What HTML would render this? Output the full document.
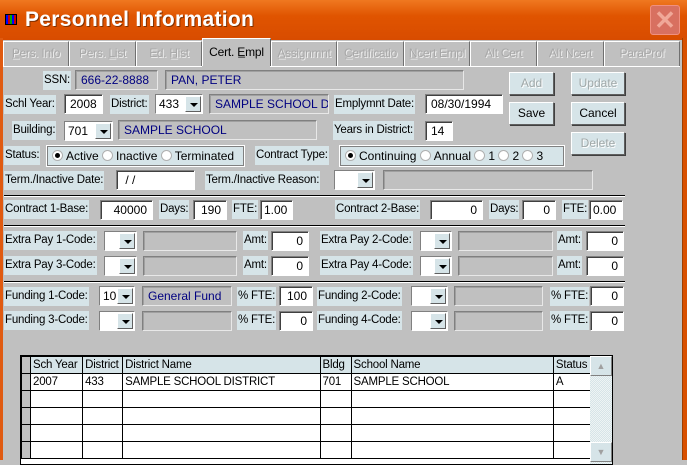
<!DOCTYPE html>
<html><head><style>
*{margin:0;padding:0;box-sizing:border-box}
body{width:687px;height:460px;overflow:hidden;background:#c0c0c0;font-family:"Liberation Sans",sans-serif;font-size:12px;position:relative}
.a{position:absolute}
.lb{position:absolute;background:#d6e4e8;color:#000;height:19px;line-height:19px;padding:0 1px;white-space:nowrap;font-size:11.5px;letter-spacing:-0.2px}
.in{position:absolute;background:#fff;height:20px;line-height:18px;border:1px solid #808080;border-right-color:#fff;border-bottom-color:#fff;box-shadow:inset 1px 1px 0 #404040;padding:0 5px;font-size:12px;white-space:nowrap;overflow:hidden}
.r{text-align:right}
.ro{position:absolute;background:#c0c0c0;height:20px;line-height:18px;border:1px solid #808080;border-right-color:#e8e8e8;border-bottom-color:#e8e8e8;box-shadow:inset 1px 1px 0 #a0a0a0;padding:0 5px;color:#000080;font-size:12px;white-space:nowrap;overflow:hidden}
.sel{position:absolute;background:#fff;height:20px;border:1px solid #808080;border-right-color:#fff;border-bottom-color:#fff;font-size:12px;line-height:18px;padding-left:3px;overflow:hidden}
.sel b{position:absolute;right:1px;top:1px;width:16px;height:16px;background:#d6e4e8;border:1px solid #fff;border-right-color:#606060;border-bottom-color:#606060}
.sel b:after{content:"";position:absolute;left:4px;top:6px;border:4px solid transparent;border-top:4px solid #000;border-bottom:0}
.btn{position:absolute;background:#d6e4e8;border:1px solid #fff;border-right-color:#606060;border-bottom-color:#606060;box-shadow:1px 1px 0 #404040;text-align:center;line-height:21px;height:23px;font-size:12px}
.dis{color:#a0a8a8;text-shadow:1px 1px 0 #fff}
.hl{position:absolute;left:4px;width:621px;height:1px;background:#000;border-bottom:1px solid #fff;height:2px}
.tab{position:absolute;top:41px;height:25px;line-height:23px;text-align:center;color:#a8a8a8;text-shadow:1px 1px 0 #eee;border:1px solid #fff;border-right-color:#707070;border-bottom:none;font-size:12px;white-space:nowrap;overflow:hidden;letter-spacing:-0.3px}
.grp{position:absolute;background:#d6e4e8;height:22px;border:1px solid #fff;box-shadow:inset -1px -1px 0 #808080, inset 1px 1px 0 #808080;line-height:20px;padding-left:5px;white-space:nowrap;font-size:12px}
.rd{display:inline-block;width:11px;height:11px;border-radius:50%;background:#fff;border:1px solid #b0b0b0;vertical-align:-1px;margin-right:3px;position:relative}
.rd.on:after{content:"";position:absolute;left:2px;top:2px;width:5px;height:5px;border-radius:50%;background:#000}
table{border-collapse:collapse;font-size:11.5px;letter-spacing:-0.2px}
td{border:1px solid #000;height:17px;line-height:16px;padding:0 2px;white-space:nowrap;overflow:hidden}
</style></head><body>
<div class="a" style="left:0;top:0;width:687px;height:40px;background:linear-gradient(#f07820,#e05400 40%,#d84c00)"></div>
<div class="a" style="left:0;top:38px;width:3px;height:422px;background:#e05a10"></div>
<div class="a" style="left:682px;top:38px;width:5px;height:422px;background:#d85000;border-left:1px solid #a04000"></div>
<div class="a" style="left:5px;top:14px;width:12px;height:11px;background:repeating-linear-gradient(90deg,#00f 0 2px,#c00 2px 4px,#0a0 4px 6px);border:1px solid #000"></div>
<div class="a" style="left:25px;top:8px;color:#fff;font-weight:bold;font-size:21px;text-shadow:1px 1px 0 #803000;letter-spacing:0.3px">Personnel Information</div>
<div class="a" style="left:650px;top:5px;width:30px;height:30px;background:#d87060;border:1px solid #f09080;border-radius:3px;color:#f0a898;font-size:26px;line-height:28px;text-align:center;font-weight:bold">✕</div>

<div class="tab" style="left:3px;width:66px">P̲ers. Info</div>
<div class="tab" style="left:69px;width:67px">Pers. L̲ist</div>
<div class="tab" style="left:136px;width:66px">Ed. H̲ist</div>
<div class="a" style="left:202px;top:38px;width:69px;height:29px;background:#c0c0c0;border:1px solid #fff;border-right-color:#606060;border-bottom:none;text-align:center;line-height:26px;letter-spacing:-0.2px">Cert. E̲mpl</div>
<div class="tab" style="left:271px;width:66px">A̲ssignmnt</div>
<div class="tab" style="left:337px;width:67px">C̲ertificatio</div>
<div class="tab" style="left:404px;width:66px">N̲cert Empl</div>
<div class="tab" style="left:470px;width:67px">Alt Cert</div>
<div class="tab" style="left:537px;width:67px">Alt Ncert</div>
<div class="tab" style="left:604px;width:76px">ParaProf</div>
<div class="a" style="left:3px;top:66px;width:677px;height:1px;background:#fff"></div>
<div class="a" style="left:202px;top:66px;width:68px;height:1px;background:#c0c0c0"></div>

<div class="lb" style="left:43px;top:71px">SSN:</div>
<div class="ro" style="left:75px;top:70px;width:83px">666-22-8888</div>
<div class="ro" style="left:165px;top:70px;width:299px">PAN, PETER</div>
<div class="btn dis" style="left:509px;top:72px;width:45px">Add</div>
<div class="btn dis" style="left:571px;top:72px;width:54px">Update</div>
<div class="btn" style="left:509px;top:102px;width:45px">Save</div>
<div class="btn" style="left:571px;top:102px;width:54px">Cancel</div>
<div class="btn dis" style="left:571px;top:132px;width:54px">Delete</div>

<div class="lb" style="left:4px;top:95px">Schl Year:</div>
<div class="in" style="left:64px;top:94px;width:39px">2008</div>
<div class="lb" style="left:110px;top:95px">District:</div>
<div class="sel" style="left:155px;top:94px;width:48px">433<b></b></div>
<div class="ro" style="left:209px;top:94px;width:120px">SAMPLE SCHOOL D</div>
<div class="lb" style="left:334px;top:95px">Emplymnt Date:</div>
<div class="in" style="left:425px;top:94px;width:78px">08/30/1994</div>

<div class="lb" style="left:12px;top:121px">Building:</div>
<div class="sel" style="left:64px;top:121px;width:49px">701<b></b></div>
<div class="ro" style="left:118px;top:120px;width:199px">SAMPLE SCHOOL</div>
<div class="lb" style="left:333px;top:121px">Years in District:</div>
<div class="in" style="left:425px;top:121px;width:28px">14</div>

<div class="lb" style="left:4px;top:146px">Status:</div>
<div class="grp" style="left:46px;top:145px;width:199px"><span class="rd on"></span>Active <span class="rd"></span>Inactive <span class="rd"></span>Terminated</div>
<div class="lb" style="left:255px;top:146px">Contract Type:</div>
<div class="grp" style="left:339px;top:145px;width:226px"><span class="rd on"></span>Continuing <span class="rd"></span>Annual <span class="rd"></span>1 <span class="rd"></span>2 <span class="rd"></span>3</div>

<div class="lb" style="left:4px;top:171px">Term./Inactive Date:</div>
<div class="in" style="left:116px;top:170px;width:79px">&nbsp;/ /</div>
<div class="lb" style="left:205px;top:171px">Term./Inactive Reason:</div>
<div class="sel" style="left:334px;top:170px;width:41px"><b></b></div>
<div class="ro" style="left:383px;top:170px;width:210px"></div>

<div class="hl" style="top:195px"></div>
<div class="lb" style="left:4px;top:200px">Contract 1-Base:</div>
<div class="in r" style="left:100px;top:200px;width:53px">40000</div>
<div class="lb" style="left:159px;top:200px">Days:</div>
<div class="in r" style="left:193px;top:200px;width:34px">190</div>
<div class="lb" style="left:232px;top:200px">FTE:</div>
<div class="in" style="left:260px;top:200px;width:33px;padding-left:3px">1.00</div>
<div class="lb" style="left:335px;top:200px">Contract 2-Base:</div>
<div class="in r" style="left:430px;top:200px;width:53px">0</div>
<div class="lb" style="left:489px;top:200px">Days:</div>
<div class="in r" style="left:522px;top:200px;width:34px">0</div>
<div class="lb" style="left:562px;top:200px">FTE:</div>
<div class="in" style="left:589px;top:200px;width:34px;padding-left:3px">0.00</div>

<div class="hl" style="top:225px"></div>
<div class="lb" style="left:4px;top:231px">Extra Pay 1-Code:</div>
<div class="sel" style="left:104px;top:231px;width:33px"><b></b></div>
<div class="ro" style="left:143px;top:231px;width:94px"></div>
<div class="lb" style="left:243px;top:231px">Amt:</div>
<div class="in r" style="left:271px;top:231px;width:38px">0</div>
<div class="lb" style="left:320px;top:231px">Extra Pay 2-Code:</div>
<div class="sel" style="left:420px;top:231px;width:32px"><b></b></div>
<div class="ro" style="left:458px;top:231px;width:95px"></div>
<div class="lb" style="left:557px;top:231px">Amt:</div>
<div class="in r" style="left:586px;top:231px;width:38px">0</div>

<div class="lb" style="left:4px;top:256px">Extra Pay 3-Code:</div>
<div class="sel" style="left:104px;top:256px;width:33px"><b></b></div>
<div class="ro" style="left:143px;top:256px;width:94px"></div>
<div class="lb" style="left:243px;top:256px">Amt:</div>
<div class="in r" style="left:271px;top:256px;width:38px">0</div>
<div class="lb" style="left:320px;top:256px">Extra Pay 4-Code:</div>
<div class="sel" style="left:420px;top:256px;width:32px"><b></b></div>
<div class="ro" style="left:458px;top:256px;width:95px"></div>
<div class="lb" style="left:557px;top:256px">Amt:</div>
<div class="in r" style="left:586px;top:256px;width:38px">0</div>

<div class="hl" style="top:281px"></div>
<div class="lb" style="left:4px;top:287px">Funding 1-Code:</div>
<div class="sel" style="left:99px;top:286px;width:36px">10<b></b></div>
<div class="ro" style="left:142px;top:286px;width:90px">General Fund</div>
<div class="lb" style="left:237px;top:287px">% FTE:</div>
<div class="in r" style="left:279px;top:286px;width:34px">100</div>
<div class="lb" style="left:317px;top:287px">Funding 2-Code:</div>
<div class="sel" style="left:411px;top:286px;width:37px"><b></b></div>
<div class="ro" style="left:454px;top:286px;width:89px"></div>
<div class="lb" style="left:550px;top:287px">% FTE:</div>
<div class="in r" style="left:590px;top:286px;width:34px">0</div>

<div class="lb" style="left:4px;top:311px">Funding 3-Code:</div>
<div class="sel" style="left:99px;top:311px;width:36px"><b></b></div>
<div class="ro" style="left:142px;top:311px;width:90px"></div>
<div class="lb" style="left:237px;top:311px">% FTE:</div>
<div class="in r" style="left:279px;top:311px;width:34px">0</div>
<div class="lb" style="left:317px;top:311px">Funding 4-Code:</div>
<div class="sel" style="left:411px;top:311px;width:37px"><b></b></div>
<div class="ro" style="left:454px;top:311px;width:89px"></div>
<div class="lb" style="left:550px;top:311px">% FTE:</div>
<div class="in r" style="left:590px;top:311px;width:34px">0</div>

<div class="a" style="left:20px;top:355px;width:593px;height:110px;background:#fff;border:1px solid #000;overflow:hidden">
<table style="position:absolute;left:0;top:0;width:570px;table-layout:fixed">
<colgroup><col style="width:9px"><col style="width:52px"><col style="width:40px"><col style="width:197px"><col style="width:31px"><col style="width:202px"><col style="width:37px"></colgroup>
<tr style="background:#d6e4e8"><td style="background:#c0c0c0"></td><td>Sch Year</td><td>District</td><td>District Name</td><td>Bldg</td><td>School Name</td><td>Status</td></tr>
<tr><td style="background:#c0c0c0"></td><td>2007</td><td>433</td><td>SAMPLE SCHOOL DISTRICT</td><td>701</td><td>SAMPLE SCHOOL</td><td>A</td></tr>
<tr><td style="background:#c0c0c0"></td><td></td><td></td><td></td><td></td><td></td><td></td></tr>
<tr><td style="background:#c0c0c0"></td><td></td><td></td><td></td><td></td><td></td><td></td></tr>
<tr><td style="background:#c0c0c0"></td><td></td><td></td><td></td><td></td><td></td><td></td></tr>
<tr><td style="background:#c0c0c0"></td><td></td><td></td><td></td><td></td><td></td><td></td></tr>
</table>
<div class="a" style="left:569px;top:0;width:22px;height:110px;background:repeating-conic-gradient(#d6e4e8 0 25%,#eef4f4 0 50%) 0 0/2px 2px"></div>
<div class="a" style="left:569px;top:0;width:22px;height:20px;background:#d6e4e8;border:1px solid #fff;border-right-color:#808080;border-bottom-color:#808080;color:#a0a0a0;font-size:9px;text-align:center;line-height:18px">▲</div>
<div class="a" style="left:569px;top:86px;width:22px;height:20px;background:#d6e4e8;border:1px solid #fff;border-right-color:#808080;border-bottom-color:#808080;color:#a0a0a0;font-size:9px;text-align:center;line-height:18px">▼</div>
</div>
</body></html>
